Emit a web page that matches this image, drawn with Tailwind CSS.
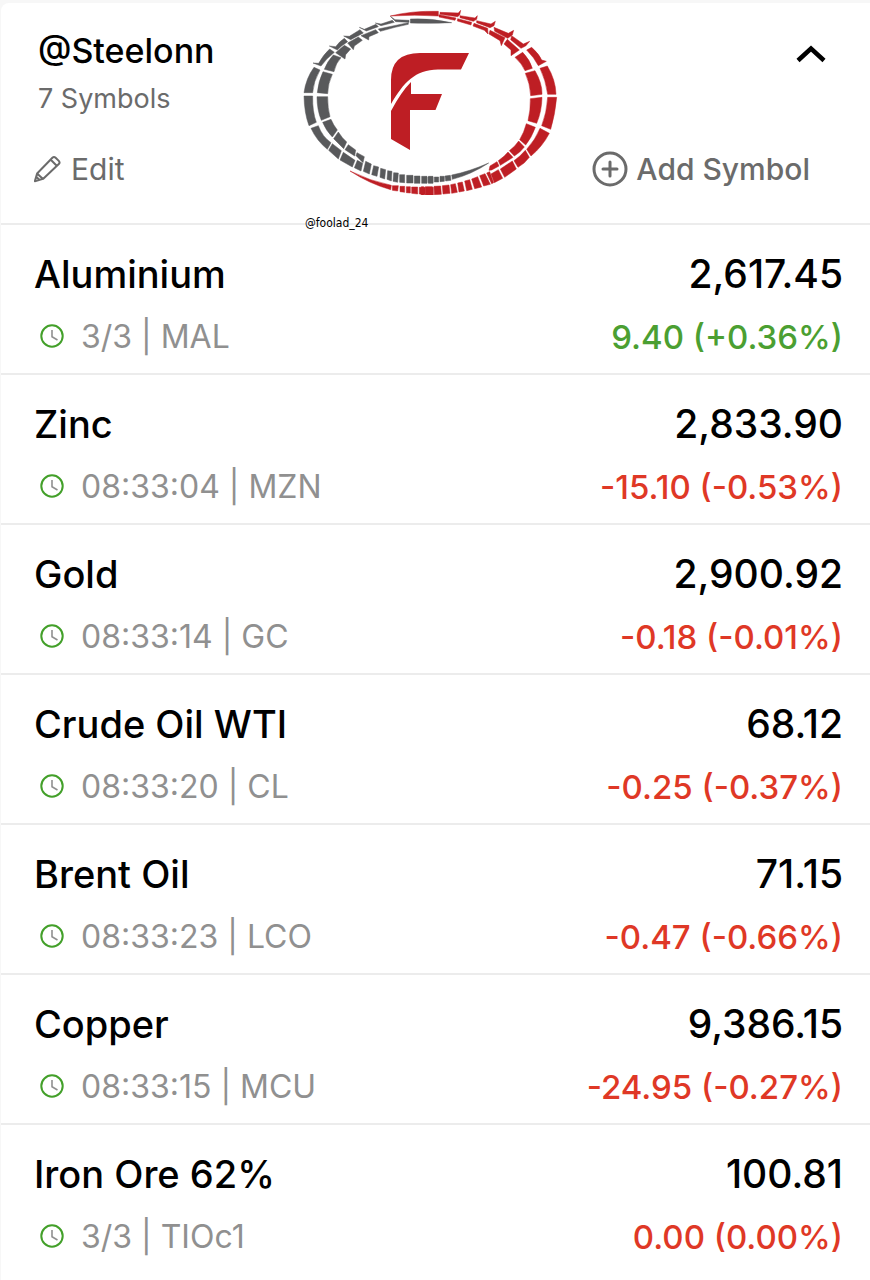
<!DOCTYPE html>
<html lang="en">
<head>
<meta charset="utf-8">
<meta name="viewport" content="width=device-width, initial-scale=1">
<title>@Steelonn</title>
<script src="https://cdn.jsdelivr.net/npm/@tailwindcss/browser@4"></script>
</head>
<body class="bg-[#f7f7f7] pt-[3px] pl-px font-[Inter,sans-serif] text-black">
<svg class="hidden" aria-hidden="true">
  <symbol id="clock" viewBox="0 0 24 24">
    <circle cx="12" cy="12" r="10.7" fill="none" stroke="#43a02a" stroke-width="2"/>
    <path d="M12 6v6.800l5.500 3.200" fill="none" stroke="#909090" stroke-width="1.600"/>
  </symbol>
</svg>
<main class="min-h-screen rounded-tl-lg bg-white">
  <header class="relative border-b-2 border-[#ececec] pt-7 pb-[34px] pl-[33px] pr-11">
    <div class="flex items-start justify-between">
      <div class="pl-1">
        <h1 class="text-[34px] leading-10 font-medium">@Steelonn</h1>
        <p class="mt-2 text-[27px] leading-10 text-[#6b6b6b]">7 Symbols</p>
      </div>
      <button type="button" aria-label="Collapse list" class="mt-3">
        <svg class="h-6 w-8" viewBox="0 0 32 24" fill="none" stroke="currentColor" stroke-width="4.500"><path d="M4 17.500 17 5.500l13 12"/></svg>
      </button>
    </div>
    <div class="mt-[30px] flex items-center justify-between pr-4 text-[30px] leading-10 text-[#6b6b6b]">
      <button type="button" class="flex items-center gap-[9px]">
        <svg class="h-7 w-7" viewBox="0 0 28 28" fill="none" stroke="currentColor" stroke-width="2" stroke-linejoin="round"><path d="M.8 26.200 3.100 18.500 18.400 2.700Q20 1.200 21.600 2.700L24.800 5.900Q26.300 7.500 24.800 9.100L9 23.900ZM3.100 18.500l5.900 5.400M16.800 4.800l5.900 5.900M.8 26.200l1.400-4.500 3.100 3.100z"/></svg>
        Edit
      </button>
      <button type="button" class="flex items-center gap-2 font-medium">
        <svg class="h-9 w-9" viewBox="0 0 36 36" fill="none" stroke="currentColor" stroke-width="3"><circle cx="18" cy="18" r="16"/><path d="M18 11v14M11 18h14" stroke-linecap="round"/></svg>
        Add Symbol
      </button>
    </div>
    <div class="absolute top-0.5 left-[299px]">
      <svg class="h-[190px] w-[262px]" viewBox="0 0 786 570" role="img" aria-label="Foolad 24">
        <g fill="#58595b" stroke="#58595b" stroke-width="1.500">
          <!-- upper left sleepers -->
          <path transform="translate(-15 -15)" d="M57 202 75 210Q55 245 53 278H27Q33 235 57 202ZM54 189 78 198Q95 175 118 157L104 147Q85 164 71 190ZM103 138 127 150Q140 136 158 125L148 115Q134 124 122 140ZM146 108 167 119 205 99 195 89 163 109ZM193 82 214 93 250 80 243 73 208 88ZM241 69 258 77 298 67 292 61 258 72ZM286 49 302 65 342 67V61L300 59ZM346 57Q410 54 470 68Q400 71 346 69ZM84 215 112 223Q99 250 98 281L67 278Q70 245 84 215ZM88 208 117 215Q122 190 138 173L115 165Q97 184 88 208ZM122 158 150 177 152 164 167 147 148 136ZM158 129 175 149 178 138 202 121 190 111ZM198 107 221 120 222 110 250 98 242 89ZM250 87 256 94 300 82 340 73V68Z"/>
          <!-- lower left sleepers -->
          <path transform="translate(-15 285)" d="M27-12H53Q52 35 64 67L42 77Q28 40 27-12ZM48 85 70 77Q82 110 108 128L97 148Q65 122 48 85ZM101 151 112 131 139 152 130 177ZM135 180 145 157 180 181 172 201ZM66-10H98Q98 25 105 50L79 61Q66 30 66-10ZM83 67 108 58Q115 75 127 90L112 111Q93 92 83 67ZM116 116 130 96Q142 115 155 126L146 146ZM150 149 160 134 182 150 179 168ZM183 167 186 158 208 170 204 188ZM178 203 187 181 203 190 198 213ZM205 214 212 184 229 192 223 222ZM230 224 236 197 251 201 246 229ZM255 232 257 205 272 209 269 237ZM276 238 278 212 291 214 289 243ZM294 244 296 218 310 219 308 247ZM314 247V224H329V248ZM335 249V226H354V249ZM358 250V228H375V250ZM380 250V229H396V250ZM400 250V229H414V250Z"/>
          <path transform="translate(375 255)" d="M-1 278V261H6V278ZM10 278V261H24V278ZM28 276V261H41V276ZM45 275V259H58V274ZM62 273 60 258 76 256 78 271ZM80 255Q132 245 191 219Q140 253 82 268Z"/>
        </g>
        <g fill="#be1e24">
          <g stroke="#be1e24" stroke-width="1.500">
          <!-- upper right sleepers -->
          <path transform="translate(375 -15)" d="M-104 48Q-40 32 40 34V48Q-30 43-104 48ZM45 37 100 39 107 31 104 45 98 50 45 43ZM105 47 150 54 157 47 155 58 145 64 105 53ZM155 62 198 72 211 64 207 77 195 83 155 68ZM207 82 250 100 266 91 262 105 248 115 209 94ZM260 107 295 132 314 124 302 138 288 145 257 119ZM305 150 320 142Q344 164 350 180L364 184 340 197Q327 172 305 150ZM345 205 367 198Q392 240 393 283H368Q362 240 345 205ZM42 44 93 54 90 61 42 51ZM98 56 140 67 138 75 97 63ZM147 70 188 85 189 102 178 91 144 78ZM195 91 240 113 229 137 225 122 192 102ZM247 118 283 150 258 167 258 150 237 132ZM270 172 293 157Q315 180 322 205L300 212Q290 190 270 172ZM301 220 330 212Q352 250 351 283L317 287Q315 250 301 220Z"/>
          <!-- lower right sleepers -->
          <path transform="translate(375 255)" d="M368 22H395Q390 75 377 118L350 107Q365 70 368 22ZM345 115 373 130Q352 170 318 198L305 178Q332 148 345 115ZM301 181 313 202Q300 220 279 232L267 212Q285 200 301 181ZM262 213 274 237 239 262 226 237ZM220 239 233 265 208 278 198 252ZM316 26 351 22Q350 65 335 100L309 92Q317 60 316 26ZM304 101 331 112Q320 143 302 165L284 149Q297 128 304 101ZM281 153 298 171Q285 188 268 198L253 182Q270 170 281 153ZM249 186 264 202 226 226 220 212Q238 200 249 186ZM216 215 222 228 200 240 192 241 195 228ZM-11 315V290H-4V315ZM1 315V290H22L23 314ZM28 314 27 289 47 288 49 313ZM54 312 52 287 72 285 75 310ZM80 310 77 284 91 281 97 307ZM102 306 98 279 112 276 118 303ZM125 302 119 273 134 269 142 298ZM149 296 140 267 158 260 170 291ZM176 288 164 257 180 251 196 283ZM200 281 185 249 194 245 206 278Z"/>
          <path transform="translate(-15 285)" d="M165 213Q225 243 289 256L287 269Q225 252 165 213ZM292 271V257H310L308 273ZM315 275V259H329V277ZM334 278V260H346V279ZM350 280V261H368V282ZM373 282V262H391V284ZM396 284V262H415V285Z"/>
          </g>
          <path transform="scale(3) translate(-300 -5)" d="M391 104V80Q391 53 420 53H469L461 69.500H438C415 70 404 82 391 104ZM391 111Q401 92 411 82V94H442L435.500 110H410V150L391 139Z"/>
        </g>
      </svg>
      <p class="pl-[5px] pt-[18px] font-['DejaVu_Sans_Condensed','DejaVu_Sans',sans-serif] text-xs leading-5">@foolad_24</p>
    </div>
  </header>
  <ul class="divide-y-2 divide-[#ececec] [&>li]:flex [&>li]:h-[150px] [&>li:last-child]:h-[148px] [&>li]:flex-col [&>li]:justify-between [&>li]:pt-6 [&>li]:pb-4 [&>li]:pl-[33px] [&>li]:pr-[27px] [&>li>div]:flex [&>li>div]:items-center [&>li>div]:justify-between [&_h2]:text-[38px] [&_h2]:leading-[50px] [&_h2]:font-medium [&_strong]:text-[39px] [&_strong]:leading-[50px] [&_strong]:font-medium [&_p]:flex [&_p]:items-center [&_p]:gap-[17px] [&_p]:pl-1.5 [&_p]:text-[32px] [&_p]:leading-10 [&_p]:text-[#909090] [&_svg]:mb-0.5 [&_svg]:size-6 [&_em]:text-[33px] [&_em]:leading-10 [&_em]:font-medium [&_em]:not-italic">
    <li><div><h2>Aluminium</h2><strong>2,617.45</strong></div><div><p><svg aria-hidden="true"><use href="#clock"/></svg>3/3 | MAL</p><em class="text-[#4b9f32]">9.40 (+0.36%)</em></div></li>
    <li><div><h2>Zinc</h2><strong>2,833.90</strong></div><div><p><svg aria-hidden="true"><use href="#clock"/></svg>08:33:04 | MZN</p><em class="text-[#df3826]">-15.10 (-0.53%)</em></div></li>
    <li><div><h2>Gold</h2><strong>2,900.92</strong></div><div><p><svg aria-hidden="true"><use href="#clock"/></svg>08:33:14 | GC</p><em class="text-[#df3826]">-0.18 (-0.01%)</em></div></li>
    <li><div><h2>Crude Oil WTI</h2><strong>68.12</strong></div><div><p><svg aria-hidden="true"><use href="#clock"/></svg>08:33:20 | CL</p><em class="text-[#df3826]">-0.25 (-0.37%)</em></div></li>
    <li><div><h2>Brent Oil</h2><strong>71.15</strong></div><div><p><svg aria-hidden="true"><use href="#clock"/></svg>08:33:23 | LCO</p><em class="text-[#df3826]">-0.47 (-0.66%)</em></div></li>
    <li><div><h2>Copper</h2><strong>9,386.15</strong></div><div><p><svg aria-hidden="true"><use href="#clock"/></svg>08:33:15 | MCU</p><em class="text-[#df3826]">-24.95 (-0.27%)</em></div></li>
    <li><div><h2>Iron Ore 62%</h2><strong>100.81</strong></div><div><p><svg aria-hidden="true"><use href="#clock"/></svg>3/3 | TIOc1</p><em class="text-[#df3826]">0.00 (0.00%)</em></div></li>
  </ul>
</main>
</body>
</html>
